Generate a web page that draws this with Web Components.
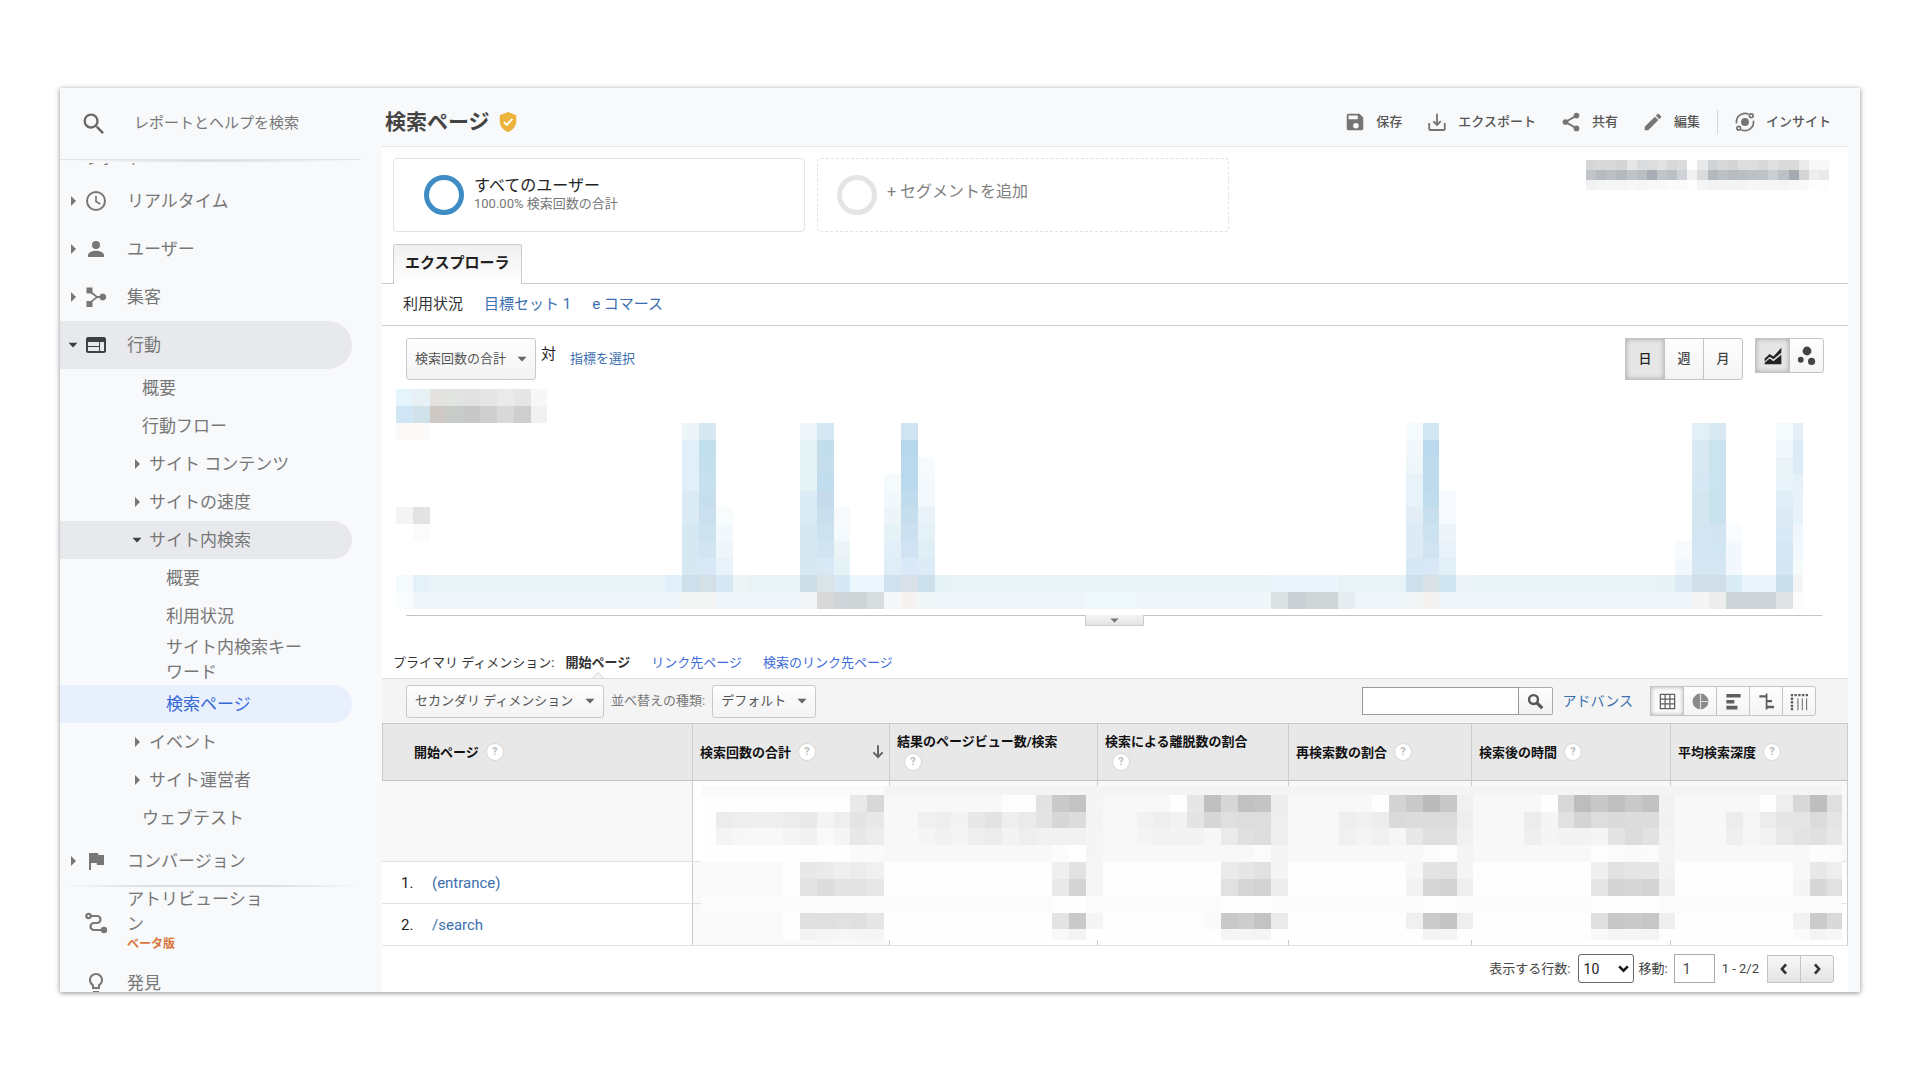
<!DOCTYPE html>
<html lang="ja">
<head>
<meta charset="utf-8">
<title>検索ページ</title>
<style>
  html, body { margin: 0; background: #fff; }
  body {
    box-sizing: border-box; height: 100vh; padding: 88px 60px;
    font: 13px/20px Roboto, "Noto Sans CJK JP", sans-serif; color: #333;
    --line: #ccc; --link: #3b6fae; --muted: #777;
  }
</style>
</head>
<body>
<report-window>
  <side-bar slot="side">
    <nav-item level="1" icon="clock" arrow="right">リアルタイム</nav-item>
    <nav-item level="1" icon="person" arrow="right">ユーザー</nav-item>
    <nav-item level="1" icon="hub" arrow="right">集客</nav-item>
    <nav-item level="1" icon="web" arrow="down" state="open">行動</nav-item>
    <nav-item level="2">概要</nav-item>
    <nav-item level="2">行動フロー</nav-item>
    <nav-item level="2" arrow="right">サイト コンテンツ</nav-item>
    <nav-item level="2" arrow="right">サイトの速度</nav-item>
    <nav-item level="2" arrow="down" state="open">サイト内検索</nav-item>
    <nav-item level="3">概要</nav-item>
    <nav-item level="3">利用状況</nav-item>
    <nav-item level="3">サイト内検索キーワード</nav-item>
    <nav-item level="3" state="current">検索ページ</nav-item>
    <nav-item level="2" arrow="right">イベント</nav-item>
    <nav-item level="2" arrow="right">サイト運営者</nav-item>
    <nav-item level="2">ウェブテスト</nav-item>
    <nav-item level="1" icon="flag" arrow="right">コンバージョン</nav-item>
    <soft-rule></soft-rule>
    <nav-item level="1" icon="path" note="ベータ版">アトリビューション</nav-item>
    <nav-item level="1" icon="bulb">発見</nav-item>
  </side-bar>
  <report-header slot="head" heading="検索ページ">
    <action-button icon="save">保存</action-button>
    <action-button icon="export">エクスポート</action-button>
    <action-button icon="share">共有</action-button>
    <action-button icon="edit">編集</action-button>
    <action-button icon="insight" divided>インサイト</action-button>
  </report-header>
  <segment-row>
    <segment-card ring="#3f8cc5" sub="100.00% 検索回数の合計">すべてのユーザー</segment-card>
    <segment-card ring="#e4e4e4" empty>+ セグメントを追加</segment-card>
  </segment-row>
  <report-tabs></report-tabs>
  <chart-panel></chart-panel>
  <dimension-bar></dimension-bar>
  <data-table></data-table>
  <pager-bar></pager-bar>
</report-window>

<script>
const ICONS = {
  search: '<path d="M15.5 14h-.79l-.28-.27A6.47 6.47 0 0 0 16 9.5 6.5 6.5 0 1 0 9.5 16c1.61 0 3.09-.59 4.23-1.57l.27.28v.79l5 4.99L20.49 19l-4.99-5zm-6 0C7.01 14 5 11.99 5 9.5S7.01 5 9.5 5 14 7.01 14 9.5 11.99 14 9.5 14z"/>',
  boldsearch: '<g fill="none" stroke="currentColor"><circle cx="9.5" cy="9.5" r="5.6" stroke-width="3"/><path d="M14 14l6.5 6.5" stroke-width="4"/></g>',
  right: '<path d="M8 2l10 10-10 10z"/>',
  down: '<path d="M3 7.500h18l-9 9.500z"/>',
  clock: '<g fill="none" stroke="currentColor" stroke-width="2"><circle cx="12" cy="12" r="9"/><path d="M12 7v5.500l4.300 2.600" stroke-width="1.700"/></g>',
  person: '<circle cx="12" cy="8" r="4"/><path d="M4 20v-2c0-2.700 5.300-4.200 8-4.200s8 1.500 8 4.200v2z"/>',
  hub: '<path d="M2.500 2.500h6v4.800l4.700 3.800h2.400a3.400 3.400 0 1 1 0 1.800h-2.400l-4.700 3.800v5.300h-6v-6h4.300l5-4-5-3.500H2.500z"/>',
  web: '<path d="M20 4H4a2 2 0 0 0-2 2v12c0 1.100.9 2 2 2h16c1.100 0 2-.9 2-2V6c0-1.100-.9-2-2-2zm-5 14H4v-4h11v4zm0-5H4V9h11v4zm5 5h-4V9h4v9z"/>',
  flag: '<path d="M14.400 6L14 4H5v17h2v-7h5.600l.4 2h7V6z"/>',
  path: '<g fill="none" stroke="currentColor" stroke-width="2.200"><circle cx="4.500" cy="5" r="2.200"/><path d="M6.700 5H13a3.500 3.500 0 0 1 0 7h-3a3.500 3.500 0 0 0 0 7h8"/></g><circle cx="20" cy="19" r="3.200"/>',
  bulb: '<path d="M9 21c0 .55.45 1 1 1h4c.55 0 1-.45 1-1v-1H9v1zm3-19C8.140 2 5 5.140 5 9c0 2.380 1.190 4.470 3 5.740V17c0 .55.45 1 1 1h6c.55 0 1-.45 1-1v-2.260c1.810-1.270 3-3.360 3-5.740 0-3.860-3.140-7-7-7zm2.850 11.100l-.85.6V16h-4v-2.300l-.85-.6A5 5 0 0 1 7 9c0-2.760 2.240-5 5-5s5 2.240 5 5c0 1.630-.8 3.160-2.150 4.100z"/>',
  save: '<path d="M17 3H5a2 2 0 0 0-2 2v14c0 1.100.9 2 2 2h14c1.100 0 2-.9 2-2V7l-4-4zm-4 16a3 3 0 1 1 0-6 3 3 0 0 1 0 6zm2-10H5V5h10v4z"/>',
  export: '<g fill="none" stroke="currentColor" stroke-width="2"><path d="M12 3v12M8 11.200l4 4 4-4M3.500 13v6.500a1.200 1.200 0 0 0 1.200 1.200h14.600a1.200 1.200 0 0 0 1.200-1.200V13"/></g>',
  share: '<path d="M18 5l-12 7 12 7" fill="none" stroke="currentColor" stroke-width="2"/><circle cx="18" cy="5" r="3.100"/><circle cx="6" cy="12" r="3.100"/><circle cx="18" cy="19" r="3.100"/>',
  edit: '<path d="M3 17.250V21h3.750L17.810 9.940l-3.750-3.750L3 17.250zM20.710 7.040a1 1 0 0 0 0-1.410l-2.340-2.340a1 1 0 0 0-1.410 0l-1.830 1.830 3.750 3.750 1.830-1.830z"/>',
  insight: '<circle cx="12" cy="12" r="4.300"/><g fill="none" stroke="currentColor" stroke-width="1.900"><path d="M2.800 13.500A9.300 9.300 0 0 1 16 3.600M21.200 10.500A9.300 9.300 0 0 1 8 20.400"/><circle cx="18.800" cy="5.200" r="2"/><circle cx="5.200" cy="18.800" r="2"/></g>',
  shield: '<path d="M12 1l9 3.600v6.600c0 5-3.500 9.700-9 11.800-5.500-2.100-9-6.800-9-11.800V4.600z" fill="#ebb33c"/><path d="M7.500 12l3.200 3.200 6-6.600" fill="none" stroke="#fff" stroke-width="2"/>',
  line: '<path d="M2 15l6-5.500 4.500 3L22 2v6l-9.500 8-4.500-3L2 18.500z"/><path d="M2 22v-2l6-5 4.500 3.200L22 10.500V22z"/>',
  bubbles: '<circle cx="12" cy="6" r="5.300"/><circle cx="4.500" cy="16.500" r="3.500"/><circle cx="17.500" cy="18.500" r="4.300"/>',
  grid: '<g fill="none" stroke="currentColor" stroke-width="1.600"><path d="M3 3h18v18H3zM9 3v18M15 3v18M3 9h18M3 15h18"/></g>',
  pie: '<circle cx="12" cy="12" r="10" fill="#8a8a8a"/><path d="M12 2v20M12 12h10" fill="none" stroke="#ddd" stroke-width="1.500"/>',
  bars: '<path d="M3 2.500h18V7H3zM3 10h10v4.500H3zM3 17.500h14V22H3z"/>',
  compare: '<path d="M3 4h8v3H3zM11 2h2.200v20H11zM13 10h6v3h-6zM13 17.500h8.500v3H13z"/>',
  pivot: '<g fill="none" stroke="currentColor"><path d="M1 4h22M1 8.500h4M1 13h4M1 17.500h4M1 21.500h4" stroke-width="3" stroke-dasharray="3 1.700"/><path d="M10 8v15M15.500 8v15M21 8v15" stroke-width="1.200"/></g>',
  sort: '<path d="M12 2v17M5 12.500l7 7 7-7" fill="none" stroke="currentColor" stroke-width="3"/>',
  chevron: '<path d="M4 8l8 8 8-8" fill="none" stroke="currentColor" stroke-width="4.500"/>',
  prev: '<path d="M15.500 4l-7 8 7 8" fill="none" stroke="currentColor" stroke-width="4.500"/>',
  next: '<path d="M8.500 4l7 8-7 8" fill="none" stroke="currentColor" stroke-width="4.500"/>'
};
const icon = (name, size) =>
  `<svg class="i" viewBox="0 0 24 24" width="${size}" height="${size}" fill="currentColor" aria-hidden="true">${ICONS[name]}</svg>`;

const RESET = `
  :host { display: block; box-sizing: border-box; }
  :host([hidden]) { display: none; }
  *, *::before, *::after { box-sizing: border-box; }
  button, input, select { font: inherit; color: inherit; margin: 0; }
  button { background: none; border: 0; padding: 0; }
  a { color: var(--link); text-decoration: none; }
  svg { display: block; flex: none; }
`;
const define = (tag, css, html) => customElements.define(tag, class extends HTMLElement {
  constructor() { super(); this.attachShadow({ mode: 'open' }); }
  connectedCallback() {
    this.shadowRoot.innerHTML = `<style>${RESET}${css}</style>` + (typeof html === 'function' ? html(this) : html);
  }
});

/* Obscured values: each entry is [row, first column, colours...]; "xx*n" repeats a colour n times. */
const MOSAICS = {
  date: { view: '0 0 24 3', base: [], cells: [
    '0 0 d6 d9 d8 d5 e6 d9dcde dd e2 d8 dc fd e9 cfd3d5 d8 d5 de de d9 e0 da da eb f7 f8',
    '1 0 c0c4c8 b7bbc0 bbbfc3 b5babe c0c4c8 b9bec2 a9aeb4 c0c5ca bbc0c4 cfd2d6 f2 d8dadc b4b9be bcc1c6 b8bcc1 b9bec3 bcc1c5 bec3c7 cacfd4 bcc1c5 a5aab0 d5 ee e9',
    '2 0 f1 f4 f6 f5 f7 f5 f8 f8 fb fb fe f4 f2 f4 f4 f4 f6 f6 f6 f4 f7 f9 fd fd'] },
  chart: { view: '0 0 83.600 13', base: [], cells: [
    '0 0 e5f3fb e7f0f4 e4e2df e2e4e2 e1 e5 ea e5 f7',
    '1 0 d0e6f4 d1e1ea cfc9c5 c9cdca c8 cf d9 ce f1',
    '2 0 fcfaf8*2', '7 0 f4 e3', '8 1 fb',
    '2 17 eef5f8 d8e8f2', '3 17 e0eff8 c2dfec', '4 17 e0eff8 c4e0ed', '5 17 e0eff8 c6e0ed',
    '6 17 dbebf5 c7dfed', '7 17 dbebf5 cae0ef f9fcfd', '8 17 d6e8f2 cce2ef f2f9fc',
    '9 17 d6e8f2 d2e4f2 eef6fa', '10 17 d6e8f2 d8e8f6 e8f2f9',
    '2 24 eef6f9 d5e8f4', '3 24 e5f2f6 c1deea', '4 24 e5f2f6 c6deec', '5 24 e5f2f6 c0dded',
    '6 24 dbebf5 c6dced', '7 24 dbebf5 c9dfee f6fafc', '8 24 d6e8f2 cce2ef f4fafd',
    '9 24 d6e8f2 d2e4f2 ecf4f8', '10 24 d6e8f2 d8e8f4 e5f2f6',
    '2 30 cfe3f1', '3 30 b7d7ea', '4 30 bbd9ec f8fbfe', '5 29 f5fafd bbd9ec f3f9fc',
    '6 29 f2f8fc c0dcec f3f9fc', '7 29 eef5f8 c6deee e9f2f9', '8 29 e5f2f6 cbe1ef e4f1f6',
    '9 29 e2eff8 d1e3f2 e0eef6', '10 29 dfedf6 d9e9f7 dcebf6',
    '2 60 f6fbfe d0e6f2', '3 60 f3f8fc bbd9ec', '4 60 f0f7fb bedbed', '5 60 e8f2f9 bedbed',
    '6 60 e7f3f8 c0dded f6fafe', '7 60 e2edf6 c8dfed f6fafe', '8 60 dcebf5 cce2ef edf5f8',
    '9 60 dcebf5 d1e3f1 eaf2f9', '10 60 d6e8f3 d8e8f6 e1eff6',
    '2 77 e3eff6 d8e9f2', '3 77 d8e9f4 cbe3ef', '4 77 d8e9f4 cbe3ef', '5 77 d6e8f3 cbe3ef',
    '6 77 d4e7f1 c9e2ee', '7 77 d4e7f1 c9e2ee', '8 77 d3e5f1 d2e4f2 f9fcfe',
    '9 76 f8fbfe d4e6f4 d2e5f3 f2f8fd', '10 76 f3f8fc d6e7f4 d6e7f4 f2f8fd',
    '2 82 f5fafd e3f0f7', '3 82 f2f8fd dcebf5', '4 82 eaf4f7 dcebf5', '5 82 e8f2f9 e4f1f8',
    '6 82 dfedf6 e8f3f9', '7 82 dceaf5 e8f3f9', '8 82 d9e9f6 f0f6fc', '9 82 d6e7f3 f3f8fc', '10 82 d3e6f2 f5fafd',
    '11 0 f5fafd e4f1f8 e8f3f8*14 e0eff9 cddfea d3e0e6 d6e8f4 ecf4f6 e9f3f7*3 cddee8 dae4e8 d6e8f5 ebf6fd*2 cee1ec dbe0e8 cde1ec e6f3f6 e8f3f8*19 eaf6fb*4 e8f3f8*4 cddfeb d9e1e5 cfe5f0 ecf4f7 e8f3f8*11 e6f2f5 dbeaf3 d0dee8*2 d9ecf5 ebf5fd*2 cadeec f4',
    '12 0 f8fcfd eef6fa*16 f3f4f4*2 eef6fa*5 f3f5f6 d8 d0d5d9 ced5d7 d8dee0 f4f8fb f5f3f2 f1f6f9 eef6fa*9 eff9fd*3 eef6fa*8 dce2e4 cad1d4 d0d6d8*2 e6ecef eef6fa*3 f2f5f6 f4f2f1 eef6fa*15 f5 eeeded cdd5d8*3 dfe3e3 fc'] },
  table: { view: '-0.870 -0.520 67.760 9.150',
    base: [[-1,-1,11,1,'fa'],[10,-1,58,1,'f4'],[-1,0,11,4,'fe'],[10,0,58,4,'f8'],[-1,4,11,5,'f9'],[4,4,1,5,'fe'],[10,4,58,5,'fe'],[22,4,1,4,'f8'],[33,4,1,4,'f8'],[44,4,1,4,'f8'],[56,4,1,4,'f8'],[-1,6,68,1,'fb']],
    cells: [
    '0 8 e9 d8', '0 17 fd*2 e2 c9 c3 f5', '0 27 fe e6 c0 d7 c1 c4 ed', '0 39 fe d3 c9 bb c8 f0', '0 49 fe d8 bd c8 bf c9 c2 f2', '0 62 fe ee d8 be df',
    '1 0 ec ee ef ef ec e9 f4 ee e4 e8', '1 12 f0 ee f3 e8 e3 ee ea e3 d7 dc f4', '1 25 f2 ee f2 e4 d7 df dd dd ee', '1 37 ee f1 ed da dc dc db ee', '1 48 ec f5 e1 d4 de da dc dc f1', '1 60 ec f6 ec e5 e5 db e5',
    '2 0 f4 f7 f8 f8 f4 f1 fa f5 e8 ec', '2 12 f5 f1 f4 ee ec f3 ee f1 f1 f1 f5', '2 25 f4 f2 f3 f3 f7 ea e0 dd ef', '2 37 f0 f4 f0 f6 e8 df df f0', '2 48 ef f5 f3 f3 f5 e4 dc e2 f3', '2 60 ef f6 f3 e9 e3 e0 e7',
    '3 8 fa fa', '3 20 fc ff f5', '3 32 fb f4', '3 42 fb fe f4', '3 52 fd fb fa fb f4', '3 65 fc fb',
    '4 5 e8 ea ef ec f0', '4 20 ef e2 f6', '4 30 eb e6 e1 f5', '4 41 f7 e4 e1 f4', '4 52 ef e2 e5 e5 f3', '4 64 f8 e8 ee',
    '5 5 e3 dc e3 e3 e7', '5 20 e9 d4 f6', '5 30 e1 d6 d3 ed', '5 41 f3 d7 d2 ef', '5 52 e5 d5 d7 d4 ef', '5 64 f5 d7 e1',
    '6 20 fe fe', '6 30 fe*3', '6 42 fe*2', '6 52 fe*4',
    '7 5 e0 df e1 df e6', '7 20 e3 c9 f5', '7 29 fa c9 cd c3 ea', '7 41 f0 cb c4 ee', '7 52 df c8 ca c7 ef', '7 64 f2 cb d9',
    '8 5 f3 f5 f6 f5 f5', '8 20 f8 f3', '8 30 f5 f5 f4', '8 42 f4 f4', '8 52 f9 f5 f5 f4', '8 64 fa f4 f7'] }
};
const colour = c => '#' + (c.length === 2 ? c + c + c : c);
const rect = (x, y, w, h, c) => `<rect x="${x}" y="${y}" width="${w}" height="${h}" fill="${colour(c)}"/>`;
define('pixel-mosaic', `svg { width: 100%; height: 100%; }`, el => {
  const m = MOSAICS[el.getAttribute('name')];
  const out = m.base.map(b => rect(...b));
  for (const line of m.cells) {
    const [row, first, ...list] = line.split(' ');
    let x = +first;
    for (const item of list) {
      const [c, n = 1] = item.split('*');
      out.push(rect(x, row, +n, 1, c));
      x += +n;
    }
  }
  return `<svg viewBox="${m.view}" preserveAspectRatio="none" shape-rendering="crispEdges" aria-hidden="true">${out.join('')}</svg>`;
});

define('report-window', `
  :host { display: flex; height: 100%; overflow: hidden; background: #f8f9fb;
    box-shadow: 0 1px 5px rgba(0,0,0,.45); position: relative; }
  .main { flex: 1; min-width: 0; display: flex; flex-direction: column; margin-right: 12px; }
  .body { flex: 1; background: #fff; }
`, `<slot name="side"></slot><div class="main"><slot name="head"></slot><main class="body"><slot></slot></main></div>`);

define('soft-rule', `
  :host { width: 301px; height: 2px; background: linear-gradient(90deg, transparent, #dcdde0 30%, #dcdde0 70%, transparent); }
`, '');

define('side-bar', `
  :host { flex: none; width: 322px; overflow: hidden; display: flex; flex-direction: column; }
  label { display: flex; align-items: center; gap: 26px; height: 71px; flex: none; padding: 1px 0 0 20px; color: #666; }
  input { flex: 1; min-width: 0; border: 0; outline: 0; padding: 0 0 3px; background: none; font-size: 15px; line-height: 24px; }
  input::placeholder { color: #777; opacity: 1; }
  .edge { flex: none; width: 301px; height: 4px; border-top: 1px solid #e4e5e7;
    background: radial-gradient(ellipse at 50% 0, #d4d5d7, transparent 70%); }
  nav { flex: 1; overflow: hidden; }
  h2 { margin: -22px 0 0; padding-left: 26px; font-size: 14px; line-height: 36px; font-weight: 400; color: var(--muted); }
`, `<label>${icon('search', 28)}<input type="search" aria-label="検索" placeholder="レポートとヘルプを検索"></label>
  <div class="edge"></div><nav><h2>レポート</h2><slot></slot></nav>`);

define('nav-item', `
  a { display: flex; align-items: center; width: 292px; min-height: 38px; border-radius: 0 24px 24px 0;
    color: var(--muted); font-size: 17px; line-height: 25px; }
  .arrow { width: 12px; }
  .label { max-width: 144px; }
  small { display: block; font-size: 12px; line-height: 14px; font-weight: 700; color: #d9753a; padding-bottom: 8px; height: 22px; }
  :host([level="1"]) a { min-height: 48px; padding-left: 7px; }
  :host([level="1"]) .label { margin-left: 19px; }
  :host([level="1"]) .arrow { margin-right: 5px; }
  :host([level="2"]) a { padding-left: 82px; }
  :host([level="2"][arrow]) a { padding-left: 71px; }
  :host([level="2"][arrow]) .label { margin-left: 6px; }
  :host([level="3"]) a { padding-left: 106px; }
  :host([state="open"]) a { background: #e8e9ed; }
  :host([state="open"]) svg { color: #3c4043; }
  :host([state="current"]) a { background: #e8f0fe; color: #3367d6; }
`, el => {
  const [ar, ic, note] = ['arrow', 'icon', 'note'].map(n => el.getAttribute(n));
  return `<a href="#">${ar || ic ? `<span class="arrow">${ar ? icon(ar, 12) : ''}</span>` : ''}${ic ? icon(ic, 24) : ''}
    <span class="label"><slot></slot>${note ? `<small>${note}</small>` : ''}</span></a>`;
});

define('report-header', `
  :host { display: flex; align-items: center; flex: none; height: 59px; padding: 10px 17px 0 3px; border-bottom: 1px solid #e6e7e9; }
  h1 { margin: 0; font-size: 21px; line-height: 32px; color: #444; font-weight: 700; }
  .shield { margin: 0 auto 0 7px; }
  .tools { display: flex; align-items: center; gap: 24px; }
`, el => `<h1>${el.getAttribute('heading')}</h1><span class="shield">${icon('shield', 22)}</span><div class="tools"><slot></slot></div>`);

define('action-button', `
  button { display: flex; align-items: center; gap: 10px; font-size: 13px; line-height: 24px; font-weight: 500; color: #555; }
  svg { color: #757575; }
  :host([divided]) { border-left: 1px solid #d5d6d9; padding-left: 16px; margin-left: -7px; }
`, el => `<button type="button">${icon(el.getAttribute('icon'), 22)}<span><slot></slot></span></button>`);

define('segment-row', `
  :host { display: flex; align-items: flex-start; gap: 12px; padding: 11px 19px 0 11px; }
  pixel-mosaic { width: 243px; height: 30px; margin: 2px 0 0 auto; }
`, `<slot></slot><pixel-mosaic name="date"></pixel-mosaic>`);

define('segment-card', `
  :host { width: 412px; }
  button { display: flex; align-items: center; gap: 10px; width: 100%; height: 74px; padding-left: 30px; text-align: left;
    border: 1px solid #e3e3e3; border-radius: 4px; }
  i { width: 40px; height: 40px; border: 5px solid var(--ring); border-radius: 50%; flex: none; }
  b, small { display: block; font-weight: 400; }
  b { font-size: 16px; line-height: 20px; color: #222; }
  small { font-size: 13px; line-height: 16px; color: #777; padding-bottom: 2px; }
  :host([empty]) button { border-style: dashed; padding-left: 19px; }
  :host([empty]) b { color: #808080; padding-bottom: 7px; }
`, el => `<button type="button"><i style="--ring:${el.getAttribute('ring')}"></i>
  <span><b><slot></slot></b>${el.hasAttribute('sub') ? `<small>${el.getAttribute('sub')}</small>` : ''}</span></button>`);

define('report-tabs', `
  .tabs { display: flex; margin-top: 12px; padding-left: 11px; border-bottom: 1px solid var(--line); }
  button { height: 40px; margin-bottom: -1px; padding: 0 11px 3px; border: 1px solid var(--line); border-bottom: 0;
    border-radius: 2px 2px 0 0; background: linear-gradient(#f0f0f0, #fff); font-size: 15px; line-height: 24px; font-weight: 700; color: #222; }
  nav { display: flex; align-items: center; gap: 21px; height: 42px; padding: 0 21px 2px; font-size: 15px; border-bottom: 1px solid var(--line); }
`, `<div class="tabs"><button type="button">エクスプローラ</button></div>
  <nav><span>利用状況</span><a href="#">目標セット 1</a><a href="#">e コマース</a></nav>`);

define('drop-down', `
  :host { display: inline-grid; }
  select { grid-area: 1/1; appearance: none; height: 100%; padding: 0 28px 0 8px; border: 1px solid #c9c9c9; border-radius: 3px;
    background: linear-gradient(#fefefe, #f3f3f3); font-size: 13px; color: #555; }
  svg { grid-area: 1/1; place-self: center end; margin-right: 8px; color: #666; pointer-events: none; }
`, el => `<select aria-label="${el.getAttribute('label')}"><option>${el.getAttribute('value')}</option></select>${icon('down', 12)}`);

define('button-group', `
  :host { display: flex; }
  button { display: grid; place-items: center; border: 1px solid #c4c4c4; margin-left: -1px; background: linear-gradient(#fefefe, #f4f4f4); color: #444;
    font-size: 13px; font-weight: 500; width: var(--w, 40px); height: var(--h, 42px); }
  button:first-child { border-radius: 3px 0 0 3px; margin-left: 0; }
  button:last-child { border-radius: 0 3px 3px 0; }
  button[aria-pressed="true"] { background: #e6e6e6; box-shadow: inset 0 0 5px rgba(0,0,0,.28); color: #222; }
  :host([plain]) button[aria-pressed="true"] { background: #fafafa; box-shadow: inset 0 0 4px rgba(0,0,0,.3); }
  :host([plain]) button { color: #5f5f5f; }
  :host([nav]) button { background: linear-gradient(#f8f8f8, #e3e3e3); color: #333; }
`, el => el.getAttribute('items').split(' ').map((n, k) =>
  `<button type="button" aria-pressed="${k === 0 && !el.hasAttribute('nav')}" ${ICONS[n] ? `aria-label="${n}"` : ''}>${ICONS[n] ? icon(n, el.getAttribute('size')) : `<span>${n}</span>`}</button>`).join(''));

define('chart-panel', `
  .bar { display: flex; align-items: flex-start; padding: 12px 24px 0; height: 54px; }
  .bar > span { font-size: 15px; line-height: 32px; margin: 0 14px 0 5px; color: #222; }
  .bar > a { line-height: 42px; }
  drop-down { height: 42px; }
  .right { display: flex; gap: 13px; margin-left: auto; }
  .shape { --w: 35px; --h: 35px; }
  pixel-mosaic { height: 220px; margin: 9px 45px 0 14px; }
  .axis { margin: 6px 26px 0 24px; border-top: 1px solid #c4c4c4; }
  .axis button { display: grid; place-items: center; width: 59px; height: 11px; margin: -1px auto 0; border: 1px solid var(--line);
    border-top: 0; background: linear-gradient(#f4f4f4, #e4e4e4); color: #777; }
`, `<div class="bar"><drop-down label="指標" value="検索回数の合計"></drop-down><span>対</span><a href="#">指標を選択</a>
    <div class="right"><button-group items="日 週 月"></button-group><button-group class="shape" items="line bubbles" size="20"></button-group></div></div>
  <pixel-mosaic name="chart"></pixel-mosaic>
  <div class="axis"><button type="button" aria-label="グラフを閉じる">${icon('down', 11)}</button></div>`);

define('dimension-bar', `
  .dims { display: flex; padding: 27px 11px 5px; gap: 21px; color: #333; --link: #3d6bd8; }
  .dims b { position: relative; font-weight: 700; margin-left: -10px; }
  .dims b::after { content: ""; position: absolute; left: 50%; bottom: -11px; width: 10px; height: 10px; margin-left: -5px;
    background: #f4f4f4; border: 1px solid #ddd; border-right: 0; border-bottom: 0; transform: rotate(45deg); }
  .tools { position: relative; display: flex; align-items: center; height: 45px; padding: 0 32px 0 24px; background: #f4f4f4; border-top: 1px solid #ddd; }
  drop-down { height: 33px; }
  .tools > label { margin: 0 7px; color: #777; }
  form { display: flex; margin: 0 10px 0 auto; }
  form input { width: 157px; height: 28px; border: 1px solid #999; padding: 0 6px; background: #fff; border-radius: 0; }
  form button { display: grid; place-items: center; width: 34px; height: 28px; border: 1px solid #aaa; border-left: 0; border-radius: 0 2px 2px 0;
    background: linear-gradient(#fefefe, #f1f1f1); color: #555; }
  .tools > a { font-size: 14px; margin-right: 18px; }
  button-group { --w: 34px; --h: 30px; }
`, `<div class="dims"><span>プライマリ ディメンション:</span><b>開始ページ</b><a href="#">リンク先ページ</a><a href="#">検索のリンク先ページ</a></div>
  <div class="tools"><drop-down label="セカンダリ ディメンション" value="セカンダリ ディメンション"></drop-down>
    <label>並べ替えの種類:</label><drop-down label="並べ替えの種類" value="デフォルト"></drop-down>
    <form><input type="text" aria-label="表を検索"><button type="button" aria-label="検索">${icon('boldsearch', 19)}</button></form>
    <a href="#">アドバンス</a><button-group plain items="grid pie bars compare pivot" size="19"></button-group></div>`);

define('help-dot', `
  :host { display: inline-block; vertical-align: top; margin-left: 8px; }
  button { display: grid; place-items: center; width: 16px; height: 16px; margin: 2px 0 3px; border-radius: 50%; background: #fff; box-shadow: 0 0 2px #bbb;
    color: #bbb; font-size: 11px; line-height: 16px; font-weight: 700; }
`, `<button type="button">?</button>`);

const HEADS = ['開始ページ', '検索回数の合計', '結果のページビュー数/検索', '検索による離脱数の割合', '再検索数の割合', '検索後の時間', '平均検索深度'];
const WIDTHS = [310, 197, 208, 191, 183, 199, 178];
const blanks = '<td></td>'.repeat(6);
define('data-table', `
  :host { position: relative; }
  table { width: 100%; table-layout: fixed; border-collapse: separate; border-spacing: 0; border-top: 1px solid #c8c8c8; }
  th, td { padding: 0; border-left: 1px solid var(--line); border-bottom: 1px solid #e1e1e1; text-align: left; }
  th:last-child, td:last-child { border-right: 1px solid var(--line); }
  td:first-child { border-left: 0; }
  th { height: 57px; background: #e8e8e8; border-bottom-color: #c4c4c4; font-size: 13px; line-height: 21px; font-weight: 700; color: #111; }
  .head { display: flex; align-items: center; justify-content: space-between; padding-left: 7px; }
  .head > span { padding-right: 30px; }
  .head > svg { margin: 0 3px 0 -30px; color: #666; }
  th:first-child .head { padding-left: 31px; }
  .sum td { height: 81px; background: #f8f8f8; }
  .sum td:nth-child(2) { background: #fff; }
  .row td { height: 42px; font-size: 15px; color: #222; }
  .row td:nth-child(2) { background: #f9f9f9; }
  .row td > span { display: inline-block; width: 31px; margin-left: 19px; }
  pixel-mosaic { position: absolute; top: 63px; right: 6px; left: 319px; height: 154px; }
`, `<table><colgroup>${WIDTHS.map(w => `<col style="width:${w}px">`).join('')}</colgroup>
  <thead><tr>${HEADS.map((h, k) => `<th scope="col"><div class="head"><span>${h}<help-dot></help-dot></span>${k === 1 ? icon('sort', 16) : ''}</div></th>`).join('')}</tr></thead>
  <tbody><tr class="sum"><td></td>${blanks}</tr>
  <tr class="row"><td><span>1.</span><a href="#">(entrance)</a></td>${blanks}</tr>
  <tr class="row"><td><span>2.</span><a href="#">/search</a></td>${blanks}</tr></tbody></table>
  <pixel-mosaic name="table"></pixel-mosaic>`);

define('pager-bar', `
  :host { display: flex; justify-content: flex-end; align-items: center; padding: 8px 14px 0 0; line-height: 28px; color: #444; }
  .pick { display: grid; margin: 0 5px 0 7px; }
  select { grid-area: 1/1; appearance: none; width: 56px; height: 29px; padding: 0 5px; border: 1px solid #666; border-radius: 3px; background: #fff; font-size: 14px; color: #222; }
  .pick svg { grid-area: 1/1; place-self: center end; margin-right: 4px; color: #111; pointer-events: none; }
  input { width: 41px; height: 29px; margin: 0 7px 0 6px; padding: 0 8px; border: 1px solid #aaa; border-radius: 0; font-size: 14px; }
  .range { margin-right: 9px; }
  button-group { --w: 34px; --h: 28px; }
`, `<label for="rows">表示する行数:</label><span class="pick"><select id="rows"><option>10</option></select>${icon('chevron', 13)}</span>
  <label for="page">移動:</label><input id="page" type="text" value="1"><span class="range">1 - 2/2</span>
  <button-group nav items="prev next" size="14"></button-group>`);
</script>
</body>
</html>
